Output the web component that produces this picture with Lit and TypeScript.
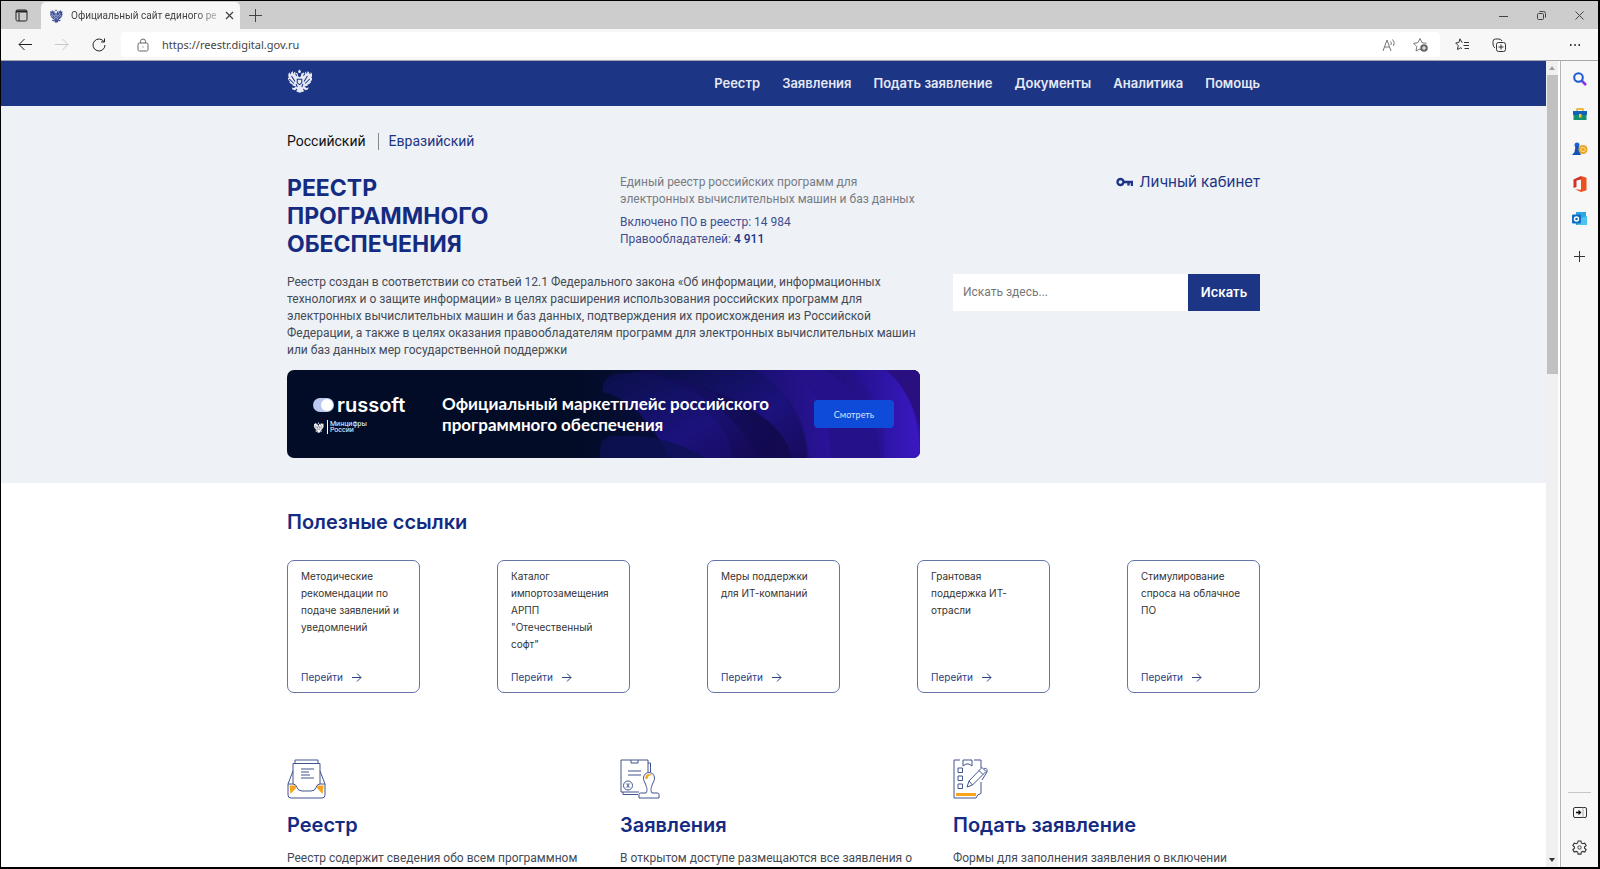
import { LitElement, html, css, svg } from "lit";
import { customElement } from "lit/decorators.js";

const eagle = svg`
  <path d="M12 .5l1.300 1.800-.5 1.600h-1.600l-.5-1.600zM8.500 3.600l1.800.9.5 2.800 1.200 1 1.200-1 .5-2.800 1.800-.9 1 1.400-1.200.7.2 1.500c1.300-.6 1.600-2.200 1.500-4.700 1 .6 1.200 1.500 1.200 2.400.7-.9.9-2 .9-3 1.500 1 1.900 2.300 1.700 3.500.6-.6 1.100-1.400 1.300-2.200 1.300 2 1.300 4 .2 5.900l1.200-.5c-.2 2-1 3.300-2.200 4.300l1.100-.1c-.9 1.500-2 2.500-3.500 3l.7.5c-1 .8-2 1.100-3.200 1l1.500 1.600 2.200-.3-.8 1.900-2.100.7-1.800-1.700-.1 1.500.9 1.300L12 23.700l-3-1.400.9-1.300-.1-1.500L8 21.200l-2.100-.7-.8-1.900 2.200.3 1.500-1.600c-1.200.1-2.200-.2-3.200-1l.7-.5c-1.500-.5-2.600-1.500-3.500-3l1.100.1c-1.200-1-2-2.300-2.200-4.300l1.200.5C1.800 7.200 1.800 5.200 3.100 3.200c.2.800.7 1.600 1.300 2.200-.2-1.200.2-2.500 1.700-3.500 0 1 .2 2.100.9 3 0-.9.2-1.800 1.200-2.400-.1 2.500.2 4.100 1.500 4.700l.2-1.500-1.200-.7z" fill="currentColor"/>
  <path d="M5 7l3 5.500M3 10l4 4.500M19 7l-3 5.500M21 10l-4 4.500M10 10.200h4v3.600L12 15.600l-2-1.800zM9 15l1 3M15 15l-1 3" fill="none" stroke="var(--cut)" stroke-width=".9"/>`;

const navItems = ["Реестр", "Заявления", "Подать заявление", "Документы", "Аналитика", "Помощь"];

const links = [
  "Методические рекомендации по подаче заявлений и уведомлений",
  "Каталог импортозамещения АРПП \"Отечественный софт\"",
  "Меры поддержки для ИТ-компаний",
  "Грантовая поддержка ИТ-отрасли",
  "Стимулирование спроса на облачное ПО",
];

const trayIcon = html`<svg class="big" viewBox="0 0 40 40" aria-hidden="true">
  <path d="M2.500 26.500h5.500l1.500 2-6 6.500zM36.500 26.500H31l-1.500 2 6 6.500z" fill="#f9a51c" stroke="none"/>
  <path d="M6 12L1 25v11q0 3 3 3h31q3 0 3-3V25l-5-13M6 25V4.500h27V25M8 4.500V1h23v3.500M1 25h5q3 0 4 3.500t5 3.500h9q4 0 5-3.500t4-3.500h5M14 10h13M14 13h8M14 16h9M14 19h13"/>
</svg>`;
const stampIcon = html`<svg class="big" viewBox="0 0 40 40" aria-hidden="true">
  <path d="M19 33H1V1h27v12M11 1v3h7V1M28 4h2.500v9M3 33v2.500h15M8 12h13M8 16h13"/>
  <circle cx="8" cy="26.500" r="4.500"/><path d="M6.200 24.500l3.600 4M9.800 24.500l-3.600 4M8 24v5" stroke-width=".8"/>
  <path d="M19 39v-3.500q0-1.500 1.500-1.500H26c2-3 .5-6-.5-9-1.500-3-2-4.500-2-6a5.500 5.500 0 0 1 11 0c0 1.500-.5 3-2 6-1 3-2.500 6-.5 9h5.500q1.500 0 1.500 1.500V39z" fill="#fff"/>
  <path d="M25.500 20q-1-4.500 3.500-5 2.500 0 3 1-4 0-4.500 4z" fill="#f9a51c" stroke="none"/>
</svg>`;
const formIcon = html`<svg class="big" viewBox="0 0 40 40" aria-hidden="true">
  <path d="M7 1H1v38h22q1-4 5-4.500V23M28 9V1h-7M10 1h9v6l-3-2h-3l-3 2zM5 9h4.500v4.500H5zM5 17h4.500v4.500H5zM5 25h4.500v4.500H5z"/>
  <path d="M3 35.500h20" stroke="#f9a51c" stroke-width="3"/>
  <path d="M14 28l2-6L29 8.500l4 4L19.500 26zM16 22l3.500 4M26 11.500l4 4M31 10q2-2 3 .5v2.500l-5 8"/>
</svg>`;

const sections = [
  { icon: trayIcon, title: "Реестр", text: "Реестр содержит сведения обо всем программном" },
  { icon: stampIcon, title: "Заявления", text: "В открытом доступе размещаются все заявления о" },
  { icon: formIcon, title: "Подать заявление", text: "Формы для заполнения заявления о включении" },
];

@customElement("browser-bars")
class BrowserBars extends LitElement {
  static styles = css`
    :host { display: block; font: 11px/16px "Noto Sans", sans-serif; color: #444; }
    button { border: 0; padding: 0; background: none; color: inherit; font: inherit; display: grid; place-items: center; }
    svg { display: block; fill: none; stroke: currentColor; }
    .tabs { display: flex; height: 28px; background: #cdcdcd; align-items: stretch; }
    .menu { width: 40px; color: #222; }
    .tab { width: 199px; box-sizing: border-box; background: #f7f7f7; border-radius: 5px 5px 0 0; display: flex; align-items: center; gap: 8px; padding: 0 8px; margin-top: 1px; }
    .tab .crest { color: #3d4f96; --cut: #f7f7f7; flex: none; stroke: none; }
    .name { flex: 1; font: 10px/16px Roboto, sans-serif; white-space: nowrap; mask-image: linear-gradient(90deg, #000 85%, rgba(0, 0, 0, 0.3)); }
    .plus { width: 30px; }
    .win { margin-left: auto; display: flex; }
    .win button { width: 38px; }
    .tools { display: flex; height: 32px; box-sizing: border-box; background: #f7f7f7; border-bottom: 1px solid #a6a6ae; align-items: center; }
    .nav { display: flex; padding-left: 5px; width: 115px; }
    .nav button { width: 37px; color: #222; }
    .nav .off { color: #c8c8c8; }
    .address { flex: 1; height: 25px; background: #fff; border-radius: 4px; display: flex; align-items: center; padding: 0 11px 0 16px; gap: 13px; color: #666; }
    .address input { flex: 1; border: 0; outline: 0; padding: 0; font: inherit; color: #444; background: none; }
    .address button { width: 18px; color: #777; }
    .after { display: flex; padding: 0 1px 0 3px; }
    .after button { width: 37px; color: #333; }
    .after .more { width: 44px; margin-left: 36px; }
  `;
  render() {
    return html`
      <div class="tabs">
        <button class="menu" aria-label="Меню вкладок"><svg width="13" height="13" viewBox="0 0 13 13"><rect x="1" y="1" width="11" height="11" rx="1.500" /><path d="M1 2.500h11" stroke-width="2"/><path d="M4 4v8"/></svg></button>
        <div class="tab">
          <svg class="crest" width="14" height="14" viewBox="0 0 24 24">${eagle}</svg>
          <span class="name">Официальный сайт единого ре</span>
          <button aria-label="Закрыть вкладку"><svg width="9" height="9" viewBox="0 0 9 9" stroke-width="1.300"><path d="M1 1l7 7M8 1l-7 7"/></svg></button>
        </div>
        <button class="plus" aria-label="Новая вкладка"><svg width="13" height="13" viewBox="0 0 13 13"><path d="M6.500 0v13M0 6.500h13"/></svg></button>
        <div class="win">
          <button aria-label="Свернуть"><svg width="9" height="9" viewBox="0 0 9 9"><path d="M0 5.500h9"/></svg></button>
          <button aria-label="Восстановить"><svg width="9" height="9" viewBox="0 0 9 9"><rect x=".5" y="2.500" width="6" height="6" rx="1"/><path d="M2.500 .5h4q2 0 2 2v4"/></svg></button>
          <button aria-label="Закрыть"><svg width="9" height="9" viewBox="0 0 9 9"><path d="M.5.5l8 8M8.500.5l-8 8"/></svg></button>
        </div>
      </div>
      <div class="tools">
        <div class="nav">
          <button aria-label="Назад"><svg width="14" height="13" viewBox="0 0 14 13"><path d="M14 6.500H1M6.500 1L1 6.500 6.500 12"/></svg></button>
          <button class="off" aria-label="Вперёд"><svg width="14" height="13" viewBox="0 0 14 13"><path d="M0 6.500h13M7.500 1L13 6.500 7.500 12"/></svg></button>
          <button aria-label="Обновить"><svg width="14" height="14" viewBox="0 0 14 14"><path d="M12.200 4A6 6 0 1 0 13 7M12.500.5V4H9"/></svg></button>
        </div>
        <div class="address">
          <svg width="12" height="14" viewBox="0 0 12 14"><rect x="1" y="5" width="10" height="8" rx="1.500"/><path d="M3.500 5V3.500a2.500 2.500 0 0 1 5 0V5M5.500 9h1"/></svg>
          <input aria-label="Адрес" value="https://reestr.digital.gov.ru" />
          <button aria-label="Прочесть вслух"><svg width="14" height="14" viewBox="0 0 14 14"><path d="M1 13L5 2l4 11M2.500 9h5M8.500 3.500q1.500 1.500.5 3.500M10.500 1.500q3 2.500 1 6.500"/></svg></button>
          <button aria-label="В избранное"><svg width="15" height="15" viewBox="0 0 15 15"><path d="M8 13l-1-1-4 2 .8-4.500L.6 6.300l4.300-.6L7 1.500l2 4.200 4.400.6"/><circle cx="11" cy="11" r="3.800" fill="#666" stroke="none"/><path d="M11 9v4M9 11h4" stroke="#fff"/></svg></button>
        </div>
        <div class="after">
          <button aria-label="Избранное"><svg width="14" height="13" viewBox="0 0 14 13"><path d="M7.500 4.200h-.8L5 .8 3.800 4.500.7 5l2.500 2.500-.7 4L5.500 9.800l1.500.8M9 4.500h5M8.500 7.500H14M9.500 10.500H14"/></svg></button>
          <button aria-label="Коллекции"><svg width="14" height="14" viewBox="0 0 14 14"><path d="M3 10Q1 9 1 6V3.500Q1 1 3.500 1H7q2 0 3 2"/><rect x="4.500" y="4.500" width="9" height="9" rx="2"/><path d="M9 6.500v5M6.500 9h5"/></svg></button>
          <button class="more" aria-label="Ещё"><svg width="12" height="4" viewBox="0 0 12 4"><path d="M1 2h1.500M5.300 2h1.500M9.500 2H11" stroke-width="1.800"/></svg></button>
        </div>
      </div>`;
  }
}

@customElement("edge-rail")
class EdgeRail extends LitElement {
  static styles = css`
    :host { display: flex; flex-direction: column; align-items: center; width: 38px; background: #f7f7f7; border-left: 1px solid #b5b5b5; box-sizing: border-box; padding: 0 0 2px; color: #333; }
    button { border: 0; padding: 0; background: none; width: 34px; height: 35px; display: grid; place-items: center; color: inherit; }
    svg { display: block; fill: none; stroke: currentColor; }
    .flat { stroke: none; }
    .add { margin-top: 3px; }
    .rule { margin-top: auto; width: 23px; height: 1px; background: #c8c8c8; margin-bottom: 2px; }
  `;
  render() {
    return html`
      <button aria-label="Поиск"><svg width="14" height="14" viewBox="0 0 14 14"><path d="M9 9l4 4" stroke="#8a33e8" stroke-width="2.500"/><circle cx="5.500" cy="5.500" r="4.300" stroke="#1c58d6" stroke-width="2"/></svg></button>
      <button aria-label="Инструменты"><svg class="flat" width="16" height="14" viewBox="0 0 16 14"><path d="M5 4V2h6v2" stroke="#e3a51b" stroke-width="1.300"/><path d="M1 4h14v4H1z" fill="#0f62b8"/><path d="M1.500 8h13v5h-13z" fill="#149070"/><path d="M7 7h2.500v3.500H7z" fill="#f8c52c"/></svg></button>
      <button aria-label="Игры"><svg class="flat" width="16" height="14" viewBox="0 0 16 14"><circle cx="5" cy="3" r="2.500" fill="#1f62d2"/><path d="M3.500 4h3L7.500 9l1.500 4H0l2.500-3z" fill="#1553ba"/><circle cx="11" cy="7.500" r="4.500" fill="#eba526"/><circle cx="11" cy="7.500" r="2.200" stroke="#fbe08a"/></svg></button>
      <button aria-label="Office"><svg class="flat" width="14" height="16" viewBox="0 0 14 16"><path d="M8 0L.500 3.500v8.500L3.500 11V4.500L8 3.500z" fill="#d3302a"/><path d="M8 0l5.500 1.700v12.600L8 16l-6-2.800 6 .5z" fill="#ee4f1d"/></svg></button>
      <button aria-label="Outlook"><svg class="flat" width="15" height="14" viewBox="0 0 15 14"><path d="M4 0h10v13H4z" fill="#2aa6e8"/><path d="M9 6l6-2v9H5z" fill="#4fc3f0"/><rect y="2.500" width="9" height="9" rx="1" fill="#0f6cbd"/><circle cx="4.500" cy="7" r="2" stroke="#fff" stroke-width="1.400"/></svg></button>
      <button class="add" aria-label="Добавить"><svg width="11" height="11" viewBox="0 0 11 11"><path d="M5.500 0v11M0 5.500h11"/></svg></button>
      <div class="rule"></div>
      <button aria-label="Боковая панель"><svg width="14" height="11" viewBox="0 0 14 11"><rect x=".5" y=".5" width="13" height="10" rx="1.500"/><path d="M10 .5v10" stroke="#aaa"/><path d="M3 5.500h4M5.500 3.500l2 2-2 2" stroke="#111" stroke-width="1.300"/></svg></button>
      <button aria-label="Параметры"><svg width="15" height="15" viewBox="0 0 16 16"><path d="M6.500 1h3l.5 2.200 1.400.8 2.200-.7 1.500 2.600-1.700 1.500v1.400l1.700 1.400-1.500 2.600-2.200-.7-1.400.8-.5 2.100h-3L6 12.900l-1.400-.8-2.200.7-1.500-2.600 1.700-1.400V7.400L.9 5.900l1.500-2.600 2.200.7L6 3.200z" stroke-width="1.200"/><circle cx="8" cy="8" r="1.800"/></svg></button>`;
  }
}

@customElement("app-root")
class AppRoot extends LitElement {
  static styles = css`
    :host { display: flex; flex-direction: column; height: 100vh; box-sizing: border-box; border: 1px solid #000; border-width: 1px 2px 2px 1px; overflow: hidden; font: 12px/17px Roboto, "Noto Sans", sans-serif; color: #444b55; --blue: #1c3584; --cut: #1c3584; }
    a { color: inherit; text-decoration: none; }
    h1, h2, h3, p { margin: 0; }
    .body { flex: 1; min-height: 0; display: flex; }
    .page { flex: 1; min-width: 0; overflow: hidden; background: #fff; }
    .scroll { width: 12px; margin-right: 2px; background: #f0f0f0; display: flex; flex-direction: column; align-items: center; padding: 5px 0; box-sizing: border-box; }
    .scroll svg { flex: none; }
    .thumb { width: 11px; height: 299px; background: #c1c1c1; margin: 5px 0 auto; }
    .wrap { max-width: 973px; margin: 0 auto; }
    header { background: var(--blue); color: #e6e9f3; }
    header .wrap { display: flex; justify-content: space-between; height: 45px; }
    .logo { padding-top: 8px; }
    nav { display: flex; gap: 22px; align-items: center; font: 600 13px/17px Inter, sans-serif; }
    .hero { background: #eef1f6; padding: 27px 0 25px; }
    .switch { display: flex; font-size: 14px; line-height: 17px; color: var(--blue); font-weight: 400; }
    .switch .on { color: #111; padding-right: 12px; margin-right: 10px; border-right: 1px solid #888; }
    .cols { display: grid; grid-template-columns: repeat(3, 1fr); column-gap: 26px; }
    .top { margin-top: 22px; }
    h1 { max-width: 250px; padding-top: 2px; font: 700 23px/28px Inter, sans-serif; color: #142b82; }
    .lead { color: #777c84; padding-top: 2px; }
    .stats { color: #3e4f8e; margin-top: 6px; }
    .stats b { color: var(--blue); font-weight: 500; }
    .account { justify-self: end; align-self: start; display: flex; align-items: center; gap: 6px; font: 15px/20px Inter, sans-serif; color: var(--blue); }
    .lower { display: flex; gap: 33px; margin-top: 16px; }
    .left { flex: 1; min-width: 0; }
    .search { width: 307px; height: 37px; display: flex; }
    .search input { flex: 1; min-width: 0; border: 0; padding: 0 10px; font: inherit; background: #fff; }
    .search input::placeholder { color: #777; opacity: 1; }
    .search button { width: 72px; border: 0; background: var(--blue); color: #fff; font: 600 13px/17px Inter, sans-serif; padding: 0; }
    .banner { position: relative; margin-top: 11px; height: 88px; border-radius: 7px; overflow: hidden; background: #020c27; color: #fff; display: flex; align-items: center; padding: 0 26px; font-family: Lato, sans-serif; }
    .art { position: absolute; top: 0; right: 0; width: 340px; height: 88px; }
    .brand { position: relative; width: 129px; }
    .rus { display: flex; align-items: center; gap: 3px; font: 600 20px/22px Inter, sans-serif; }
    .min { display: flex; align-items: center; gap: 3px; font: 7px/6px Roboto, sans-serif; margin-top: 4px; --cut: #020c27; }
    .min span { border-left: 1px solid #fff; padding: 1px 0 1px 2px; }
    .slogan { position: relative; flex: 1; font-size: 17px; line-height: 21px; font-weight: 700; }
    .look { position: relative; width: 80px; height: 28px; border: 0; border-radius: 4px; background: #0d4bd8; color: #d8e2ff; font: 9px Lato, sans-serif; }
    .useful { padding-top: 27px; }
    h2, h3 { font: 600 20px/24px Inter, sans-serif; color: #142b82; }
    .cards { display: flex; justify-content: space-between; margin-top: 26px; }
    .card { width: 133px; height: 133px; box-sizing: border-box; border: 1px solid #6673a6; border-radius: 7px; padding: 7px 13px 6px; display: flex; flex-direction: column; justify-content: space-between; font: 10px/17px Inter, sans-serif; color: #333; }
    .go { display: flex; align-items: center; gap: 9px; color: #2c4187; }
    .info { margin-top: 66px; }
    .info h3 { margin-top: 14px; }
    .info p { margin-top: 13px; white-space: nowrap; }
    .big { display: block; width: 40px; height: 40px; fill: none; stroke: #41558f; }
  `;
  render() {
    return html`
      <browser-bars></browser-bars>
      <div class="body">
        <main class="page">
          <header><div class="wrap">
            <a class="logo" href="#" aria-label="На главную"><svg width="25" height="24" viewBox="1 0 22 24" preserveAspectRatio="none">${eagle}</svg></a>
            <nav>${navItems.map((n) => html`<a href="#">${n}</a>`)}</nav>
          </div></header>
          <section class="hero"><div class="wrap">
            <div class="switch"><a class="on" href="#">Российский</a><a href="#">Евразийский</a></div>
            <div class="cols top">
              <h1>РЕЕСТР ПРОГРАММНОГО ОБЕСПЕЧЕНИЯ</h1>
              <div>
                <p class="lead">Единый реестр российских программ для электронных вычислительных машин и баз данных</p>
                <p class="stats">Включено ПО в реестр: 14 984<br />Правообладателей: <b>4 911</b></p>
              </div>
              <a class="account" href="#"><svg width="17" height="10" viewBox="0 0 17 10" fill="none" stroke="currentColor" stroke-width="2.400"><circle cx="4.500" cy="5" r="3"/><path d="M8 5h8v4M12.500 5v3.500"/></svg>Личный кабинет</a>
            </div>
            <div class="lower">
              <div class="left">
                <p>Реестр создан в соответствии со статьей 12.1 Федерального закона «Об информации, информационных технологиях и о защите информации» в целях расширения использования российских программ для электронных вычислительных машин и баз данных, подтверждения их происхождения из Российской Федерации, а также в целях оказания правообладателям программ для электронных вычислительных машин или баз данных мер государственной поддержки</p>
                <div class="banner">
                  <svg class="art" viewBox="0 0 340 88" preserveAspectRatio="none" aria-hidden="true">
                    <defs>
                      <linearGradient id="base"><stop offset="0" stop-color="#020c27"/><stop offset=".3" stop-color="#0a0e42"/><stop offset=".6" stop-color="#190f6a"/><stop offset="1" stop-color="#2f13a4"/></linearGradient>
                      <linearGradient id="petal" x1="0" y1="0" x2="1" y2="1"><stop offset="0" stop-color="#0a0f48"/><stop offset=".6" stop-color="#1b127c"/><stop offset="1" stop-color="#170a5c"/></linearGradient>
                      <linearGradient id="shade"><stop offset="0" stop-color="#08093a" stop-opacity="0"/><stop offset="1" stop-color="#12063f"/></linearGradient>
                      <linearGradient id="glow"><stop offset="0" stop-color="#22118a"/><stop offset="1" stop-color="#3b18c2"/></linearGradient>
                    </defs>
                    <rect width="340" height="88" fill="url(#base)"/>
                    <path d="M23 22Q20 2 50 3q60 2 100 30 34 22 40 55H90Q60 30 23 22z" fill="url(#petal)"/>
                    <path d="M50 3q90 12 130 85h32Q200 40 150 14 110 0 70 0z" fill="#120d5a" opacity=".7"/>
                    <path d="M80 0h95q48 30 52 88h-15Q196 30 80 6z" fill="url(#petal)"/>
                    <path d="M20 88q-2-22 14-22 50-4 90 22z" fill="#0e1254" opacity=".8"/>
                    <path d="M130 30q70 10 82 58h-60Q150 50 100 25z" fill="url(#shade)" opacity=".5"/>
                    <path d="M175 0h40q36 32 36 88h-22Q226 32 175 0z" fill="url(#glow)" opacity=".4"/>
                    <path d="M215 0h30q52 30 55 88h-49Q250 30 215 0z" fill="#25118a"/>
                    <path d="M270 0h40q30 34 30 88h-36Q308 32 270 0z" fill="url(#glow)"/>
                    <path d="M306 0h34v58Q330 20 306 0z" fill="#2a0f80"/>
                  </svg>
                  <div class="brand">
                    <div class="rus"><svg width="21" height="14" viewBox="0 0 21 14"><rect width="21" height="14" rx="7" fill="#b9c8ee"/><circle cx="14" cy="7" r="6" fill="#fff"/></svg>russoft</div>
                    <div class="min"><svg width="11" height="13" viewBox="0 0 24 24">${eagle}</svg><span>Минцифры<br />России</span></div>
                  </div>
                  <div class="slogan">Официальный маркетплейс российского программного обеспечения</div>
                  <button class="look">Смотреть</button>
                </div>
              </div>
              <form class="search"><input aria-label="Поиск по реестру" placeholder="Искать здесь..." /><button type="button">Искать</button></form>
            </div>
          </div></section>
          <section class="wrap useful">
            <h2>Полезные ссылки</h2>
            <div class="cards">${links.map((t) => html`<a class="card" href="#"><span>${t}</span><span class="go">Перейти<svg width="10" height="9" viewBox="0 0 10 9"><path d="M0 4.500h9M5 .5l4 4-4 4" fill="none" stroke="currentColor"/></svg></span></a>`)}</div>
          </section>
          <section class="wrap cols info">${sections.map((s) => html`<article>${s.icon}<h3>${s.title}</h3><p>${s.text}</p></article>`)}</section>
        </main>
        <div class="scroll">
          <svg width="6" height="4" viewBox="0 0 6 4"><path d="M0 4l3-4 3 4z" fill="#a0a0a0"/></svg>
          <div class="thumb"></div>
          <svg width="6" height="4" viewBox="0 0 6 4"><path d="M0 0l3 4 3-4z" fill="#333"/></svg>
        </div>
        <edge-rail></edge-rail>
      </div>`;
  }
}
